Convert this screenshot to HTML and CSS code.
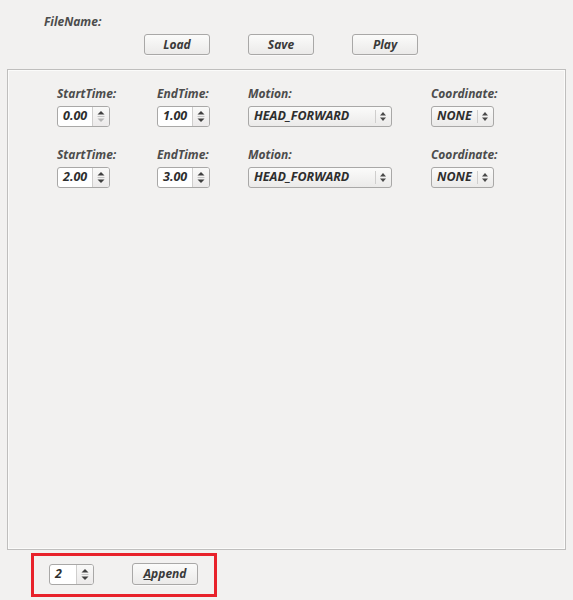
FILE: index.html
```html
<!DOCTYPE html>
<html>
<head>
<meta charset="utf-8">
<link rel="stylesheet" href="styles.css">
</head>
<body>
<div class="header">
  <div class="filename">FileName:</div>
  <div class="buttons">
    <div class="btn">Load</div>
    <div class="btn">Save</div>
    <div class="btn">Play</div>
  </div>
</div>

<div class="frame">
  <div class="record">
    <div class="field"><div class="label">StartTime:</div>
      <div class="spin w-time"><span class="val">0.00</span><span class="arrows"><svg width="16" height="19" viewBox="0 0 16 19"><path d="M4.5 7.5 L8 4 L11.5 7.5Z" fill="#3f3f3f"/><path d="M4.5 9.5h7" stroke="#c4c4c4"/><path d="M4.5 11.5 L8 15 L11.5 11.5Z" fill="#b5b5b5"/></svg></span></div>
    </div>
    <div class="field"><div class="label">EndTime:</div>
      <div class="spin w-time"><span class="val">1.00</span><span class="arrows"><svg width="16" height="19" viewBox="0 0 16 19"><path d="M4.5 7.5 L8 4 L11.5 7.5Z" fill="#3f3f3f"/><path d="M4.5 9.5h7" stroke="#c4c4c4"/><path d="M4.5 11.5 L8 15 L11.5 11.5Z" fill="#3f3f3f"/></svg></span></div>
    </div>
    <div class="field"><div class="label">Motion:</div>
      <div class="combo w-motion"><span class="val">HEAD_FORWARD</span><span class="carrow"><svg width="8" height="13" viewBox="0 0 8 13"><path d="M1 5.5 L4 2 L7 5.5Z" fill="#4a4a4a"/><path d="M1 7.5 L4 11 L7 7.5Z" fill="#4a4a4a"/></svg></span></div>
    </div>
    <div class="field"><div class="label">Coordinate:</div>
      <div class="combo w-coord"><span class="val">NONE</span><span class="carrow"><svg width="8" height="13" viewBox="0 0 8 13"><path d="M1 5.5 L4 2 L7 5.5Z" fill="#4a4a4a"/><path d="M1 7.5 L4 11 L7 7.5Z" fill="#4a4a4a"/></svg></span></div>
    </div>
  </div>

  <div class="record">
    <div class="field"><div class="label">StartTime:</div>
      <div class="spin w-time"><span class="val">2.00</span><span class="arrows"><svg width="16" height="19" viewBox="0 0 16 19"><path d="M4.5 7.5 L8 4 L11.5 7.5Z" fill="#3f3f3f"/><path d="M4.5 9.5h7" stroke="#c4c4c4"/><path d="M4.5 11.5 L8 15 L11.5 11.5Z" fill="#3f3f3f"/></svg></span></div>
    </div>
    <div class="field"><div class="label">EndTime:</div>
      <div class="spin w-time"><span class="val">3.00</span><span class="arrows"><svg width="16" height="19" viewBox="0 0 16 19"><path d="M4.5 7.5 L8 4 L11.5 7.5Z" fill="#3f3f3f"/><path d="M4.5 9.5h7" stroke="#c4c4c4"/><path d="M4.5 11.5 L8 15 L11.5 11.5Z" fill="#3f3f3f"/></svg></span></div>
    </div>
    <div class="field"><div class="label">Motion:</div>
      <div class="combo w-motion"><span class="val">HEAD_FORWARD</span><span class="carrow"><svg width="8" height="13" viewBox="0 0 8 13"><path d="M1 5.5 L4 2 L7 5.5Z" fill="#4a4a4a"/><path d="M1 7.5 L4 11 L7 7.5Z" fill="#4a4a4a"/></svg></span></div>
    </div>
    <div class="field"><div class="label">Coordinate:</div>
      <div class="combo w-coord"><span class="val">NONE</span><span class="carrow"><svg width="8" height="13" viewBox="0 0 8 13"><path d="M1 5.5 L4 2 L7 5.5Z" fill="#4a4a4a"/><path d="M1 7.5 L4 11 L7 7.5Z" fill="#4a4a4a"/></svg></span></div>
    </div>
  </div>
</div>

<div class="bottom">
  <div class="spin w-count"><span class="val">2</span><span class="arrows"><svg width="16" height="19" viewBox="0 0 16 19"><path d="M4.5 7.5 L8 4 L11.5 7.5Z" fill="#3f3f3f"/><path d="M4.5 9.5h7" stroke="#c4c4c4"/><path d="M4.5 11.5 L8 15 L11.5 11.5Z" fill="#3f3f3f"/></svg></span></div>
  <div class="btn btn-append"><span class="mn">A</span>ppend</div>
</div>
</body>
</html>
```

FILE: styles.css
```css
html, body {
  margin: 0;
  padding: 0;
  background: #f2f1f0;
  width: 573px;
  height: 600px;
  overflow: hidden;
  font-family: "Open Sans", "DejaVu Sans", sans-serif;
  font-weight: 700;
  font-style: italic;
  font-size: 12px;
  color: #3c3c3c;
}

.header {
  padding-top: 14px;
  height: 56px;
  box-sizing: border-box;
}

.filename {
  margin-left: 44px;
  line-height: 16px;
  color: #4c4c4c;
}

.buttons {
  display: flex;
  gap: 38px;
  margin-left: 144px;
  margin-top: 4px;
}

.btn {
  width: 66px;
  height: 21px;
  box-sizing: border-box;
  border: 1px solid #a9a8a7;
  border-radius: 3px;
  background: linear-gradient(#fbfbfa, #ebeae9);
  display: flex;
  align-items: center;
  justify-content: center;
  color: #3a3a3a;
  line-height: 1;
  box-shadow: 0 1px 0 rgba(255,255,255,0.6);
}

.frame {
  margin: 13px 7px 0 7px;
  height: 481px;
  box-sizing: border-box;
  border: 1px solid #bfbebd;
  box-shadow: inset 0 0 0 1px #fbfbfa;
  padding: 17px 0 0 49px;
  display: flex;
  flex-direction: column;
  gap: 21px;
}

.record {
  display: grid;
  grid-template-columns: 100px 91px 183px auto;
}

.label {
  line-height: 14px;
  margin-bottom: 5px;
  color: #4c4c4c;
}

.spin, .combo {
  height: 21px;
  box-sizing: border-box;
  border: 1px solid #a9a8a7;
  border-radius: 3px;
  display: flex;
  align-items: stretch;
  color: #2e2e2e;
  font-size: 12.5px;
}

.spin {
  background: #fff;
}

.combo {
  background: linear-gradient(#fbfbfa, #ebeae9);
}

.val {
  flex: 1;
  display: flex;
  align-items: center;
  padding-left: 5px;
  line-height: 1;
}

.arrows {
  width: 16px;
  border-left: 1px solid #cfcecd;
  background: linear-gradient(#f9f9f8, #eceaea);
  border-radius: 0 2px 2px 0;
  display: flex;
  align-items: center;
  justify-content: center;
}

.carrow {
  width: 16px;
  display: flex;
  align-items: center;
  justify-content: center;
  position: relative;
}

.carrow::before {
  content: "";
  position: absolute;
  left: 0;
  top: 3px;
  bottom: 3px;
  border-left: 1px solid #cfcecd;
}

.w-time { width: 53px; }
.w-motion { width: 144px; }
.w-coord { width: 63px; }
.w-count { width: 45px; }

.bottom {
  margin: 3px 0 0 31px;
  width: 186px;
  height: 44px;
  box-sizing: border-box;
  border: 3px solid #e8222b;
  padding: 8px 0 0 15px;
  display: flex;
  gap: 38px;
  align-items: flex-start;
}

.btn-append {
  height: 22px;
  margin-top: -1px;
  font-size: 12px;
}

.mn {
  text-decoration: underline;
}
```
